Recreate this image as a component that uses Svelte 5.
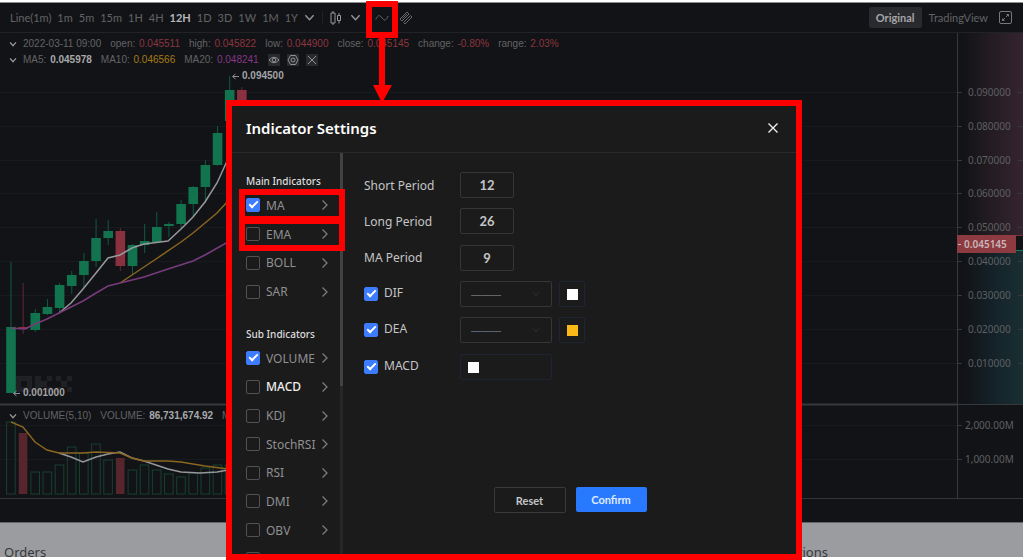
<script lang="ts">

    interface Indicator {
        name: string,
        checked: boolean,
        current?: boolean,
        marked?: boolean,
    }

    interface Readout {
        label: string,
        value: string,
        tone: string,
    }

    let intervals: string[] = ['Line(1m)', '1m', '5m', '15m', '1H', '4H', '12H', '1D', '3D', '1W', '1M', '1Y']
    let interval = '12H'

    const prices: Readout[] = [
        { label: 'open:', value: '0.045511', tone: 'down' },
        { label: 'high:', value: '0.045822', tone: 'down' },
        { label: 'low:', value: '0.044900', tone: 'down' },
        { label: 'close:', value: '0.045145', tone: 'down' },
        { label: 'change:', value: '-0.80%', tone: 'down' },
        { label: 'range:', value: '2.03%', tone: 'down' },
    ]

    const averages: Readout[] = [
        { label: 'MA5:', value: '0.045978', tone: 'white' },
        { label: 'MA10:', value: '0.046566', tone: 'gold' },
        { label: 'MA20:', value: '0.048241', tone: 'purple' },
    ]

    // high, body top, body bottom, low, volume top, rising
    const candles: [number, number, number, number, number, boolean][] = [
        [229, 294, 360, 360, 389, true],
        [250, 294, 296, 301, 400, false],
        [276, 280, 297, 299, 439, true],
        [266, 274, 281, 282, 439, true],
        [250, 252, 275, 279, 432, true],
        [238, 242, 253, 261, 414, true],
        [220, 228, 242, 255, 420, true],
        [186, 205, 228, 234, 411, true],
        [187, 198, 205, 212, 427, true],
        [195, 198, 233, 238, 425, false],
        [211, 212, 233, 242, 437, true],
        [191, 208, 212, 220, 432, true],
        [179, 194, 209, 210, 437, true],
        [189, 191, 193, 204, 441, true],
        [167, 171, 191, 195, 444, true],
        [153, 154, 171, 183, 440, true],
        [127, 132, 154, 170, 435, true],
        [93, 100, 132, 133, 432, true],
        [43, 57, 88, 100, 432, true],
        [54, 57, 100, 100, 440, false],
    ]

    const pitch = 12.15
    const gridLines = [59, 93, 127, 160, 194, 228, 262, 296, 330, 392, 426]
    const priceTicks = ['0.090000', '0.080000', '0.070000', '0.060000', '0.050000', '0.040000', '0.030000', '0.020000', '0.010000']

    let mainIndicators: Indicator[] = [
        { name: 'MA', checked: true, marked: true },
        { name: 'EMA', checked: false, marked: true },
        { name: 'BOLL', checked: false },
        { name: 'SAR', checked: false },
    ]

    let subIndicators: Indicator[] = [
        { name: 'VOLUME', checked: true },
        { name: 'MACD', checked: false, current: true },
        { name: 'KDJ', checked: false },
        { name: 'StochRSI', checked: false },
        { name: 'RSI', checked: false },
        { name: 'DMI', checked: false },
        { name: 'OBV', checked: false },
        { name: '', checked: false },
    ]

    let periods = [
        { id: 'short', label: 'Short Period', value: '12' },
        { id: 'long', label: 'Long Period', value: '26' },
        { id: 'ma', label: 'MA Period', value: '9' },
    ]

    let lines = [
        { id: 'dif', label: 'DIF', shown: true, color: '#ffffff' },
        { id: 'dea', label: 'DEA', shown: true, color: '#fbb918' },
    ]

    let macd = { shown: true, color: '#ffffff' }

</script>

{#snippet chevron(cls: string)}
    <svg class="chevron {cls}" viewBox="0 0 12 12" aria-hidden="true">
        <path d="M1.5 3.5 6 8.5 10.5 3.5" />
    </svg>
{/snippet}

{#snippet indicatorList(items: Indicator[])}
    <ul>
        {#each items as item (item.name)}
            <li class:marked={item.marked} class:current={item.current}>
                <label><input type="checkbox" bind:checked={item.checked} />{item.name}</label>
                <button class="open" aria-label="{item.name} settings">
                    <svg width="8" height="12" viewBox="0 0 8 12"><path d="M1.5 1.5 6 6 1.5 10.5" /></svg>
                </button>
            </li>
        {/each}
    </ul>
{/snippet}

<div class="screen">
    <div class="terminal">
        <header class="toolbar">
            <nav class="intervals">
                {#each intervals as name (name)}
                    <button class:active={name === interval} on:click={() => interval = name}>{name}</button>
                {/each}
                <button aria-label="More intervals">{@render chevron('')}</button>
            </nav>
            <div class="tools">
                <button aria-label="Chart type">
                    <svg width="12" height="14" viewBox="0 0 12 14">
                        <path d="M3 0v2M3 12v2M1 2h4v10H1zM9 2v2.500M9 9.500v3M7.500 4.500h3v5h-3z" />
                    </svg>
                </button>
                <button aria-label="More chart types">{@render chevron('')}</button>
                <button class="curve" aria-label="Indicators">
                    <svg width="14" height="10" viewBox="0 0 14 10">
                        <path d="M.8 6.500C2.500 3 4 1.800 5.500 3.200L8.500 6.500C10 8 11.500 6.500 13.200 3" />
                    </svg>
                    <svg class="pointer" width="32" height="102" viewBox="0 0 32 102">
                        <path d="M3 3h26v31H3z" fill="none" stroke="#f00" stroke-width="6" />
                        <path d="M13 36h6v48h7L16 102 7 84h6z" fill="#f00" stroke="none" />
                    </svg>
                </button>
                <button aria-label="Drawing tools">
                    <svg width="14" height="14" viewBox="0 0 14 14">
                        <path d="M1 8 8 1 10 3 3 10zM4.500 11.500 11.500 4.500 13 6 6 13zM3.500 7.500 8 3" />
                    </svg>
                </button>
            </div>
            <div class="views">
                <button class="selected">Original</button>
                <button>TradingView</button>
                <button aria-label="Full screen">
                    <svg width="13" height="13" viewBox="0 0 13 13">
                        <path d="M2 .5h9q1.500 0 1.500 1.500v9q0 1.500-1.500 1.500H2Q.5 12.500.5 11V2Q.5.5 2 .5zM7.500 3.500h2v2M9.500 3.500l-2.500 2.500M5.500 9.500h-2v-2M3.500 9.500 6 7" />
                    </svg>
                </button>
            </div>
        </header>

        <main class="chart">
            <div class="plot">
                <svg class="drawing" width="100%" height="466" role="img" aria-label="Price chart">
                    {#each gridLines as y}
                        <line class="grid" x1="0" x2="100%" y1={y + 0.5} y2={y + 0.5} />
                    {/each}
                    <g class="watermark">
                        <path d="M16 343h16v16H16zM21 348v6h6v-6z" fill-rule="evenodd" />
                        <path d="M35 343h6v16h-6zM41 348h6v6h-6zM47 343h5v5h-5zM47 354h5v5h-5z" />
                        <path d="M56 343h5v5h-5zM67 343h5v5h-5zM61 348h6v6h-6zM56 354h5v5h-5zM67 354h5v5h-5z" />
                    </g>
                    {#each candles as [high, top, bottom, low, volume, rising], i}
                        <g class={rising ? 'rise' : 'fall'}>
                            <line class="wick" x1={11 + i * pitch} x2={11 + i * pitch} y1={high} y2={low} />
                            <rect class="body" x={6.2 + i * pitch} y={top} width="9.6" height={bottom - top} />
                            <rect class="volume" x={6.6 + i * pitch} y={volume} width="8.6" height={461 - volume} />
                        </g>
                    {/each}
                    <g class="average">
                        <polyline class="white" points="59,280 71,270 83,256 96,240 108,225 120,222 132,215 144,211 168,208 181,196 193,184 205,169 217,150 228,126" />
                        <polyline class="gold" points="120,250 132,242 156,226 181,209 193,200 205,190 217,180 228,168" />
                        <polyline class="purple" points="11,295 25,296 35,291 47,286 59,280 83,268 96,260 108,253 120,250 132,247 144,244 168,236 193,228 205,222 228,209" />
                        <polyline class="white" points="59,420 71,424 83,429 96,424 108,421 120,419 132,425 144,428 156,432 168,436 181,439 200,440 217,439 228,437" />
                        <polyline class="gold" points="11,389 23,394 35,409 47,417 59,420 83,420 96,419 120,420 132,425 144,428 168,428 181,429 205,433 228,436" />
                    </g>
                    <path class="arrow" d="M239 43.500h-6M235.500 41l-3 2.500 3 2.500M20 360.500h-6M16.500 358l-3 2.500 3 2.500" />
                    <text class="mark" x="242" y="46">0.094500</text>
                    <text class="mark" x="23" y="363">0.001000</text>
                    <line class="edge" x1="0" x2="100%" y1="371.500" y2="371.500" />
                </svg>
                <div class="legend">
                    <p>
                        {@render chevron('small')}
                        <span>2022-03-11 09:00</span>
                        {#each prices as item (item.label)}
                            <span>{item.label} <b class={item.tone}>{item.value}</b></span>
                        {/each}
                    </p>
                    <p>
                        {@render chevron('small')}
                        {#each averages as item (item.label)}
                            <span>{item.label} <b class={item.tone}>{item.value}</b></span>
                        {/each}
                        <button aria-label="Hide"><svg width="12" height="12" viewBox="0 0 12 12"><path d="M1 6Q6 .500 11 6 6 11.500 1 6z" /><circle cx="6" cy="6" r="1.800" /></svg></button>
                        <button aria-label="Settings"><svg width="12" height="12" viewBox="0 0 12 12"><path d="M3.500 1.500h5L11 6 8.500 10.500h-5L1 6z" /><circle cx="6" cy="6" r="2" /></svg></button>
                        <button aria-label="Remove"><svg width="12" height="12" viewBox="0 0 12 12"><path d="M2 2 10 10M10 2 2 10" /></svg></button>
                    </p>
                </div>
                <div class="legend lower">
                    <p>
                        {@render chevron('small')}
                        <span>VOLUME(5,10)</span>
                        <span>VOLUME: <b class="white">86,731,674.92</b></span>
                        <span>MA5:</span>
                    </p>
                </div>
            </div>
            <svg class="axis" width="66" height="466" role="img" aria-label="Price scale">
                <defs>
                    <linearGradient id="asks"><stop offset="0.1" stop-color="#121316" /><stop offset="0.45" stop-color="#211b20" /><stop offset="1" stop-color="#352430" /></linearGradient>
                    <linearGradient id="bids"><stop offset="0.1" stop-color="#121316" /><stop offset="0.6" stop-color="#14242a" /><stop offset="1" stop-color="#1a2f33" /></linearGradient>
                </defs>
                <rect x="0" y="0" width="66" height="202" fill="url(#asks)" />
                <rect x="0" y="217" width="66" height="154" fill="url(#bids)" />
                {#each priceTicks as tick, i}
                    <path class="tick" d="M1 {gridLines[i] + 0.5}h4M61 {gridLines[i] + 0.5}h5" />
                    <text x="11" y={gridLines[i] + 4}>{tick}</text>
                {/each}
                <path class="tick" d="M1 392.500h4M1 426.500h4" />
                <text x="8" y="396">2,000.00M</text>
                <text x="8" y="430">1,000.00M</text>
                <path class="tick" d="M0.500 0v466M0 371.500h66" />
                <path d="M59 202.500h7" stroke="#7d2f3c" />
                <path d="M59 217.500h7" stroke="#0f7d58" />
                <rect x="0" y="202" width="59" height="18" fill="#8e3a41" />
                <path d="M1 211.500h3" stroke="#c5b5b7" />
                <text class="last" x="7" y="215">0.045145</text>
            </svg>
        </main>
        <div class="strip"></div>
        <footer class="orders">
            <span>Orders</span>
            <span class="positions">Positions</span>
        </footer>
    </div>

    <div class="dialog" role="dialog" aria-labelledby="dialog-title">
        <div class="dialog-head">
            <h2 id="dialog-title">Indicator Settings</h2>
            <button aria-label="Close"><svg width="12" height="12" viewBox="0 0 12 12"><path d="M1.500 1.500 10.500 10.500M10.500 1.500 1.500 10.500" /></svg></button>
        </div>
        <div class="dialog-body">
            <aside>
                <h3>Main Indicators</h3>
                {@render indicatorList(mainIndicators)}
                <h3>Sub Indicators</h3>
                {@render indicatorList(subIndicators)}
            </aside>
            <div class="track"><div class="thumb"></div></div>
            <form on:submit|preventDefault>
                <div class="fields">
                    {#each periods as period (period.id)}
                        <div class="field">
                            <label for={period.id}>{period.label}</label>
                            <input id={period.id} type="text" bind:value={period.value} />
                        </div>
                    {/each}
                    {#each lines as line (line.id)}
                        <div class="field">
                            <label><input type="checkbox" bind:checked={line.shown} /><span>{line.label}</span></label>
                            <div class="style-select">
                                <select class={line.id} aria-label="{line.label} line style">
                                    <option>———</option>
                                </select>
                                {@render chevron('faint')}
                            </div>
                            <input type="color" aria-label="{line.label} color" bind:value={line.color} />
                        </div>
                    {/each}
                    <div class="field">
                        <label><input type="checkbox" bind:checked={macd.shown} /><span>MACD</span></label>
                        <input class="wide" type="color" aria-label="MACD color" bind:value={macd.color} />
                    </div>
                </div>
                <div class="actions">
                    <button type="reset">Reset</button>
                    <button class="primary" type="submit">Confirm</button>
                </div>
            </form>
        </div>
    </div>
</div>

<style>
:global(body) {
    margin: 0;
    background-color: #fff;
}

.screen {
    position: relative;
    padding: 2px 1px 3px 0;
    overflow: hidden;
    font-family: "Noto Sans", "Open Sans", sans-serif;
}

button {
    padding: 0;
    border: 0;
    background: none;
    color: inherit;
    font: inherit;
    cursor: pointer;
}

svg {
    display: block;
    flex: none;
}

button svg, .chevron {
    fill: none;
    stroke: currentColor;
}

.terminal {
    border-top: 1px solid #8e8e90;
    background-color: #121316;
    color: #626366;
}

.toolbar {
    display: flex;
    align-items: center;
    height: 29px;
    padding: 0 11px 0 10px;
    border-bottom: 1px solid #222326;
    font-family: Lato, sans-serif;
    font-size: 11px;
}

.intervals {
    display: flex;
    gap: 6px;
    align-items: center;
    padding-right: 7px;
    border-right: 1px solid #202124;
}

.intervals .active {
    color: #b5b6b8;
    font-weight: 700;
}

.chevron {
    width: 11px;
    height: 11px;
    color: #96979a;
    stroke-width: 1.5;
}

.chevron.small {
    width: 8px;
    height: 8px;
    stroke-width: 2;
}

.tools {
    display: flex;
    gap: 8px;
    align-items: center;
    padding-left: 7px;
    color: #96979a;
}

.curve {
    position: relative;
    margin: 0 2px 0 6px;
    color: #66676a;
}

.curve ~ button {
    color: #66676a;
}

.pointer {
    position: absolute;
    top: -12px;
    left: -9px;
    z-index: 2;
}

.views {
    display: flex;
    gap: 7px;
    align-items: center;
    margin-left: auto;
}

.views .selected {
    height: 21px;
    padding: 0 7px;
    border-radius: 2px;
    background-color: #292a2d;
    color: #a5a6a8;
    font-weight: 700;
}

.views button:last-child {
    margin-left: 4px;
    color: #77787b;
}

.chart {
    display: flex;
    height: 465px;
    border-bottom: 1px solid #333437;
}

.plot {
    position: relative;
    flex: 1;
    min-width: 0;
}

.drawing {
    position: absolute;
    top: 0;
    left: 0;
}

.grid {
    stroke: #191a1d;
}

.edge, .tick {
    stroke: #37383b;
    fill: none;
}

.edge {
    stroke-width: 2;
}

.watermark {
    fill: #202124;
}

.rise .body {
    fill: #11744f;
}

.rise .wick {
    stroke: #0e5b40;
}

.rise .volume {
    fill: none;
    stroke: #17402f;
}

.fall .body {
    fill: #8a303f;
}

.fall .wick {
    stroke: #642833;
}

.fall .volume {
    fill: #56262c;
}

.average polyline {
    fill: none;
    stroke-width: 1.5;
}

polyline.white {
    stroke: #97989b;
}

polyline.gold {
    stroke: #8a6620;
}

polyline.purple {
    stroke: #783b7c;
}

.arrow {
    fill: none;
    stroke: #8d8e91;
}

.mark {
    fill: #a3a4a6;
    font-family: "Liberation Sans", Arial, sans-serif;
    font-size: 10px;
    font-weight: 700;
}

.legend {
    position: relative;
    padding: 3px 9px;
    font-family: "Liberation Sans", Arial, sans-serif;
    font-size: 10px;
    line-height: 16px;
    white-space: nowrap;
}

.legend.lower {
    position: absolute;
    top: 372px;
    left: 0;
}

.legend p {
    display: flex;
    gap: 9px;
    align-items: center;
    margin: 0;
}

.legend .chevron + span {
    margin-left: -3px;
}

.legend b {
    margin-left: 1px;
    font-weight: 400;
}

.legend .white {
    color: #a8a9ab;
    font-weight: 700;
}

.legend .gold {
    color: #a67a16;
}

.legend .purple {
    color: #843887;
}

.legend .down {
    color: #8c3540;
}

.legend button {
    background-color: #292a2d;
    color: #909194;
}

.legend button + button {
    margin-left: -2px;
}

.axis {
    font-family: "Noto Sans", sans-serif;
    font-size: 10px;
}

.axis text {
    fill: #5e5f62;
}

.axis .last {
    fill: #c8b6b8;
    font-weight: 600;
}

.strip {
    height: 23px;
}

.orders {
    display: flex;
    height: 34px;
    padding: 0 4px;
    overflow: hidden;
    border-top: 1px solid #66676a;
    background-color: #9b9c9f;
    color: #37383b;
    font-size: 13px;
    line-height: 58px;
}

.positions {
    margin-left: auto;
    padding-right: 191px;
}

.dialog {
    position: absolute;
    inset: 100px 222px 0 226px;
    display: flex;
    flex-direction: column;
    overflow: hidden;
    border: 6px solid #f00;
    background-color: #1b1b1b;
    color: #c4c5c7;
    font-size: 12px;
}

.dialog-head {
    display: flex;
    flex: none;
    align-items: center;
    justify-content: space-between;
    height: 46px;
    padding: 0 17px 0 14px;
    border-bottom: 1px solid #2b2b2b;
}

h2 {
    margin: 0;
    color: #fff;
    font-size: 15px;
    font-weight: 600;
    line-height: 20px;
    padding-bottom: 2px;
}

.dialog-head button {
    padding-bottom: 2px;
    color: #eee;
}

.dialog-head path {
    stroke-width: 1.4;
}

.dialog-body {
    display: flex;
    flex: 1;
    min-height: 0;
}

aside {
    position: relative;
    z-index: 1;
    width: 86px;
    padding: 19px 8px 0 14px;
}

h3 {
    margin: 0;
    color: #dcdcde;
    font-size: 10px;
    font-weight: 500;
    line-height: 19px;
    white-space: nowrap;
}

ul {
    display: grid;
    grid-auto-rows: 1fr;
    height: 115px;
    margin: 0;
    padding: 0;
    list-style: none;
}

h3 + ul {
    margin-bottom: 19px;
}

ul:last-child {
    height: 229px;
}

li {
    position: relative;
    display: flex;
    align-items: center;
    justify-content: space-between;
    color: #8f9092;
}

li.current {
    color: #eee;
    font-weight: 500;
}

li.marked::after {
    position: absolute;
    inset: -2px -13px -2px -7px;
    border: 6px solid #f00;
    content: "";
    pointer-events: none;
}

label {
    display: flex;
    gap: 6px;
    align-items: center;
}

.open {
    margin-right: 3px;
    color: #7b7c7e;
}

.open path {
    stroke-width: 1.3;
}

input[type="checkbox"] {
    display: grid;
    place-items: center;
    width: 14px;
    height: 14px;
    box-sizing: border-box;
    margin: 0;
    border: 1px solid #515254;
    border-radius: 2px;
    appearance: none;
}

input[type="checkbox"]:checked {
    border-color: #3d7bff;
    background-color: #3d7bff;
}

input[type="checkbox"]:checked::after {
    width: 7px;
    height: 3px;
    margin-bottom: 3px;
    border: solid #fff;
    border-width: 0 0 2px 2px;
    transform: rotate(-45deg);
    content: "";
}

.track {
    width: 3px;
    background-color: #272727;
}

.thumb {
    height: 58%;
    background-color: #424242;
}

form {
    display: flex;
    flex: 1;
    flex-direction: column;
    padding: 14px 20px 41px 21px;
}

.fields {
    display: grid;
    grid-auto-rows: 1fr;
    height: 218px;
}

.field {
    display: flex;
    gap: 7px;
    align-items: center;
}

.field label {
    width: 89px;
}

.field label span {
    padding-bottom: 3px;
}

input[type="text"], input[type="color"], select {
    height: 26px;
    box-sizing: border-box;
    border: 1px solid #353637;
    border-radius: 2px;
    background-color: transparent;
}

input[type="text"] {
    width: 54px;
    padding: 0;
    color: #c4c5c7;
    font-family: Lato, sans-serif;
    font-size: 13px;
    font-weight: 700;
    text-align: center;
}

.style-select {
    display: flex;
    align-items: center;
    width: 92px;
}

select {
    width: 100%;
    padding: 0 10px;
    appearance: none;
    color: #77787a;
    font-family: "Liberation Sans", Arial, sans-serif;
    font-size: 10px;
}

select.dea {
    color: #66788a;
}

.chevron.faint {
    width: 8px;
    height: 8px;
    margin-left: -20px;
    margin-right: 12px;
    color: #2f3031;
    pointer-events: none;
}

input[type="color"] {
    width: 26px;
    padding: 0;
    border-color: #1d2534;
}

input.wide {
    width: 92px;
}

input[type="color"]::-webkit-color-swatch-wrapper {
    padding: 7px 6px 6px 7px;
}

input.wide::-webkit-color-swatch-wrapper {
    padding-right: 72px;
}

input[type="color"]::-webkit-color-swatch {
    border: 0;
    border-radius: 0;
}

.actions {
    display: flex;
    gap: 10px;
    justify-content: center;
    margin-top: auto;
    font-family: Lato, sans-serif;
    font-size: 11px;
    font-weight: 700;
}

.actions button {
    width: 72px;
    height: 26px;
    box-sizing: border-box;
    border: 1px solid #393a3b;
    border-radius: 2px;
}

.actions .primary {
    width: 71px;
    height: 25px;
    border: 0;
    background-color: #2979ff;
    color: #dfeaff;
}
</style>
